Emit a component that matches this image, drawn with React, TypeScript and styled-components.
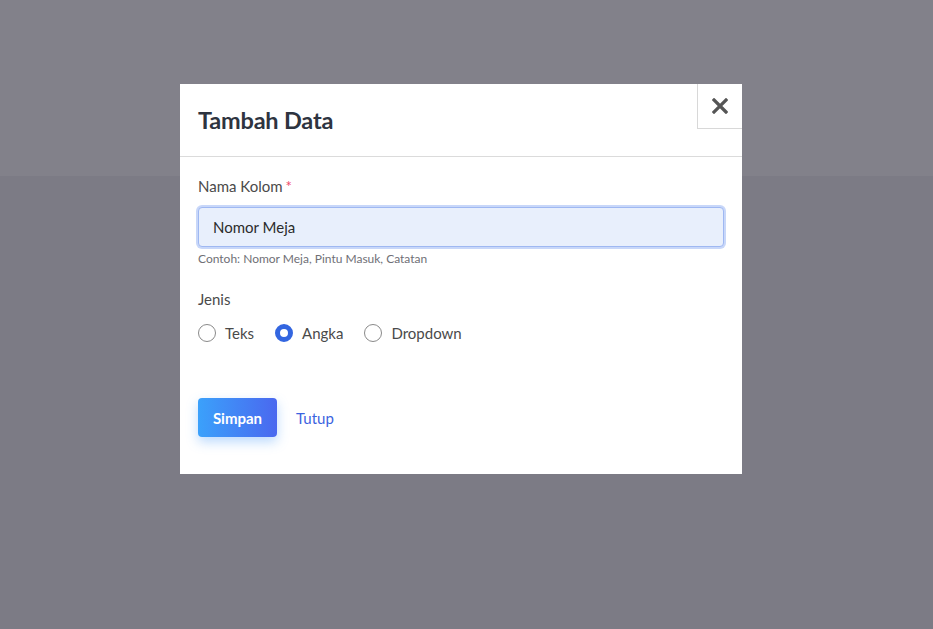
import styled, { createGlobalStyle } from 'styled-components';
import { useState } from 'react';

const GlobalStyle = createGlobalStyle`
  html, body {
    margin: 0;
    padding: 0;
  }
  body {
    font-family: 'Lato', 'Noto Sans', sans-serif;
    background: #7c7b85;
  }
`;

const Page = styled.div`
  min-height: 100vh;
  display: flex;
  flex-direction: column;
`;

const TopBand = styled.div`
  height: 176px;
  background: #82818a;
`;

const Rest = styled.div`
  flex: 1;
  background: #7c7b85;
`;

const Overlay = styled.div`
  position: fixed;
  inset: 0;
  display: flex;
  align-items: flex-start;
  padding: 84px 0 0 180px;
`;

const Modal = styled.div`
  width: 562px;
  height: 390px;
  background: #fff;
  display: flex;
  flex-direction: column;
`;

const ModalHeader = styled.div`
  height: 72px;
  border-bottom: 1px solid #dbdbdb;
  display: flex;
  justify-content: space-between;
  align-items: flex-start;
`;

const Title = styled.h2`
  margin: 22px 0 0 18px;
  font-size: 23.5px;
  font-weight: 700;
  color: #2e3440;
  letter-spacing: -0.2px;
`;

const CloseButton = styled.button`
  width: 45px;
  height: 45px;
  border: 1px solid #d8d8d8;
  border-right: none;
  border-top: none;
  background: #fff;
  display: flex;
  align-items: center;
  justify-content: center;
  padding: 0;
  cursor: pointer;
`;

const Body = styled.div`
  padding: 19px 18px 0;
`;

const Label = styled.div`
  font-size: 15px;
  color: #4a4a4a;
  line-height: 20px;
`;

const Required = styled.span`
  color: #f14668;
  margin-left: 3px;
`;

const Input = styled.input`
  box-sizing: border-box;
  margin-top: 11px;
  width: 526px;
  height: 40px;
  padding: 0 14px;
  font-family: inherit;
  font-size: 15px;
  color: #2b2b2b;
  background: #e8effc;
  border: 1px solid #9fb8f2;
  border-radius: 4px;
  box-shadow: 0 0 0 2px #c8d7f9;
  outline: none;
`;

const Help = styled.div`
  margin-top: 4px;
  font-size: 12px;
  color: #6f6f76;
`;

const Field = styled.div<{ $gap?: number }>`
  margin-top: ${(p) => p.$gap ?? 0}px;
`;

const RadioRow = styled.div`
  display: flex;
  gap: 21px;
  margin-top: 15px;
`;

const RadioLabel = styled.label`
  display: flex;
  align-items: center;
  gap: 9px;
  font-size: 15px;
  color: #4a4a4a;
  cursor: pointer;
`;

const Circle = styled.span<{ $on: boolean }>`
  box-sizing: border-box;
  width: 18px;
  height: 18px;
  border-radius: 50%;
  border: ${(p) => (p.$on ? '5px solid #3366e0' : '1px solid #8a8a8a')};
  background: #fff;
`;

const Actions = styled.div`
  display: flex;
  align-items: center;
  gap: 19px;
  margin-top: 56px;
`;

const PrimaryButton = styled.button`
  height: 39px;
  width: 79px;
  border: none;
  border-radius: 4px;
  background: linear-gradient(90deg, #3ba1fb, #4a68ef);
  color: #fff;
  font-family: inherit;
  font-size: 15px;
  font-weight: 700;
  box-shadow: 0 5px 12px rgba(62, 150, 250, 0.35);
  cursor: pointer;
`;

const LinkButton = styled.a`
  font-size: 15px;
  color: #3b63e0;
  text-decoration: none;
`;

const options = ['Teks', 'Angka', 'Dropdown'];

export default function App() {
  const [jenis, setJenis] = useState('Angka');
  return (
    <>
      <GlobalStyle />
      <Page>
        <TopBand />
        <Rest />
      </Page>
      <Overlay>
        <Modal>
          <ModalHeader>
            <Title>Tambah Data</Title>
            <CloseButton aria-label="close">
              <svg width="16" height="16" viewBox="0 0 16 16">
                <path d="M2 2 L14 14 M14 2 L2 14" stroke="#555" strokeWidth="3.2" strokeLinecap="square" />
              </svg>
            </CloseButton>
          </ModalHeader>
          <Body>
            <Field>
              <Label>
                Nama Kolom<Required>*</Required>
              </Label>
              <Input defaultValue="Nomor Meja" />
              <Help>Contoh: Nomor Meja, Pintu Masuk, Catatan</Help>
            </Field>
            <Field $gap={23}>
              <Label>Jenis</Label>
              <RadioRow>
                {options.map((o) => (
                  <RadioLabel key={o} onClick={() => setJenis(o)}>
                    <Circle $on={jenis === o} />
                    {o}
                  </RadioLabel>
                ))}
              </RadioRow>
            </Field>
            <Actions>
              <PrimaryButton>Simpan</PrimaryButton>
              <LinkButton href="#">Tutup</LinkButton>
            </Actions>
          </Body>
        </Modal>
      </Overlay>
    </>
  );
}
